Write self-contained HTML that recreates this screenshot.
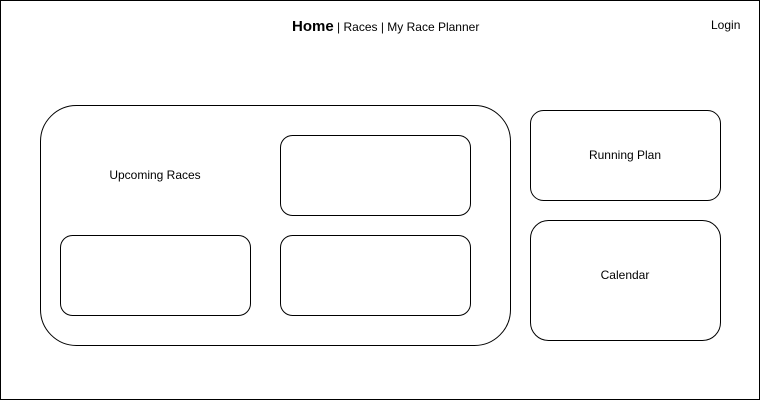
<!DOCTYPE html>
<html><head><meta charset="utf-8"><style>
html,body{margin:0;padding:0;background:#fff;}
svg{display:block;}
text{font-family:"Liberation Sans",Arial,sans-serif;fill:#000;}
</style></head><body>
<svg width="761" height="401" viewBox="0 0 761 401" xmlns="http://www.w3.org/2000/svg">
<rect x="0.5" y="0.5" width="759" height="399" fill="#fff" stroke="#000" stroke-width="1"/>
<text x="292" y="31" font-size="15" font-weight="bold">Home<tspan font-weight="normal" font-size="12"> | Races | My Race Planner</tspan></text>
<text x="711" y="29" font-size="12">Login</text>
<g fill="#fff" stroke="#000" stroke-width="1">
<rect x="40.5" y="105.5" width="470" height="240" rx="36" ry="36"/>
<rect x="280.5" y="135.5" width="190" height="80" rx="12" ry="12"/>
<rect x="60.5" y="235.5" width="190" height="80" rx="12" ry="12"/>
<rect x="280.5" y="235.5" width="190" height="80" rx="12" ry="12"/>
<rect x="530.5" y="110.5" width="190" height="90" rx="13" ry="13"/>
<rect x="530.5" y="220.5" width="190" height="120" rx="18" ry="18"/>
</g>
<text x="155" y="179" font-size="12" text-anchor="middle">Upcoming Races</text>
<text x="625" y="159" font-size="12" text-anchor="middle">Running Plan</text>
<text x="625" y="279" font-size="12" text-anchor="middle">Calendar</text>
</svg>
</body></html>
